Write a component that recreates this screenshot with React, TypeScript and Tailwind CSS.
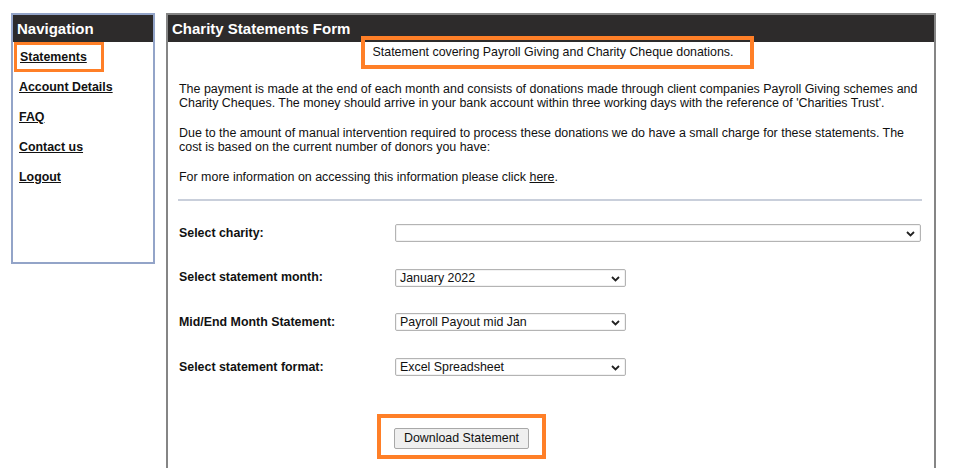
import React from "react";

const font = { fontFamily: '"Liberation Sans", Arial, sans-serif' };

function Chevron() {
  return (
    <svg width="9" height="6" viewBox="0 0 9 6" className="absolute right-[5px] top-[6px]">
      <path d="M1 1 L4.5 4.5 L8 1" fill="none" stroke="#222" strokeWidth="1.8" />
    </svg>
  );
}

function Select({ value, wide }: { value: string; wide?: boolean }) {
  return (
    <div
      className={`relative h-[18px] ${wide ? "w-[526px]" : "w-[231px]"} border border-[#b4b4b4] rounded-[2px] bg-white text-[12.4px] leading-[16px] text-[#111] pl-[4px] shadow-[inset_0_0_0_1px_#f2f2f2]`}
    >
      {value}
      <Chevron />
    </div>
  );
}

function Row({ label, value, wide }: { label: string; value: string; wide?: boolean }) {
  return (
    <div className="flex items-center h-[18px]">
      <div className="w-[216px] font-bold text-[12.4px] text-[#111]">{label}</div>
      <Select value={value} wide={wide} />
    </div>
  );
}

export default function App() {
  return (
    <div className="h-[468px] overflow-hidden bg-white flex items-start gap-[11px] pt-[13px] pl-[11px]" style={font}>
      <div className="w-[144px] h-[251px] border-2 border-[#93a4c8] shrink-0">
        <div className="h-[27px] bg-[#2d2b2b] text-white font-bold text-[15px] leading-[27px] pl-[4px]">Navigation</div>
        <div className="text-[12.4px] font-bold text-[#111]">
          <div className="pl-[1px]">
            <div className="w-[90px] h-[30px] border-[3px] border-[#ff7f27] flex items-center pl-[3px]">
              <span className="underline">Statements</span>
            </div>
          </div>
          <div className="h-[30px] flex items-center pl-[6px]"><span className="underline">Account Details</span></div>
          <div className="h-[30px] flex items-center pl-[6px]"><span className="underline">FAQ</span></div>
          <div className="h-[30px] flex items-center pl-[6px]"><span className="underline">Contact us</span></div>
          <div className="h-[30px] flex items-center pl-[6px]"><span className="underline">Logout</span></div>
        </div>
      </div>

      <div className="w-[770px] h-[470px] border-2 border-b-0 border-[#858585] shrink-0">
        <div className="h-[27px] bg-[#2d2b2b] text-white font-bold text-[15px] leading-[27px] pl-[4px]">
          Charity Statements Form
        </div>
        <div className="px-[11px]">
          <div className="flex justify-center -mt-[6px] relative pl-[13px]">
            <div className="border-[4px] border-[#ff7f27] pl-[8px] pr-[17px] py-[5px] text-[12.4px] leading-[15px] text-[#111]">
              Statement covering Payroll Giving and Charity Cheque donations.
            </div>
          </div>
          <div className="mt-[13px] text-[12.45px] leading-[14px] text-[#111]">
            <p>
              The payment is made at the end of each month and consists of donations made through client companies Payroll Giving schemes and
              <br />
              Charity Cheques. The money should arrive in your bank account within three working days with the reference of 'Charities Trust'.
            </p>
            <p className="mt-[16px]">
              Due to the amount of manual intervention required to process these donations we do have a small charge for these statements. The
              <br />
              cost is based on the current number of donors you have:
            </p>
            <p className="mt-[16px]">
              For more information on accessing this information please click <span className="underline">here</span>.
            </p>
          </div>
          <div className="mt-[15px] border-t-2 border-[#c9cfdb] mr-[1px] -ml-[1px]" />
          <div className="mt-[23px] flex flex-col gap-[26.7px]">
            <Row label="Select charity:" value="" wide />
            <Row label="Select statement month:" value="January 2022" />
            <Row label="Mid/End Month Statement:" value="Payroll Payout mid Jan" />
            <Row label="Select statement format:" value="Excel Spreadsheet" />
          </div>
          <div className="mt-[38px] ml-[198px] w-fit border-[4px] border-[#ff7f27] px-[13px] pt-[7px] pb-[6px]">
            <button className="w-[135px] h-[21px] bg-[#efefef] border border-[#a8a8a8] rounded-[2px] text-[12.4px] text-[#111] leading-[19px]">
              Download Statement
            </button>
          </div>
        </div>
      </div>
    </div>
  );
}
